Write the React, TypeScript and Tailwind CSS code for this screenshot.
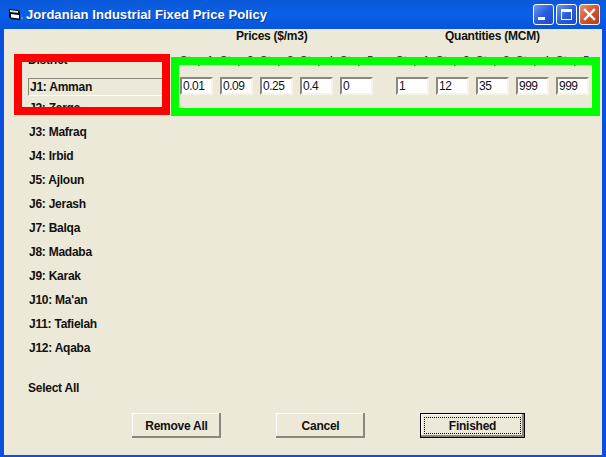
const districts = [
  "J2: Zarqa",
  "J3: Mafraq",
  "J4: Irbid",
  "J5: Ajloun",
  "J6: Jerash",
  "J7: Balqa",
  "J8: Madaba",
  "J9: Karak",
  "J10: Ma'an",
  "J11: Tafielah",
  "J12: Aqaba",
];
const prices = ["0.01", "0.09", "0.25", "0.4", "0"];
const quantities = ["1", "12", "35", "999", "999"];
const steps = ["Step 1", "Step 2", "Step 3", "Step 4", "Step 5"];

function Field({ value }: { value: string }) {
  return (
    <div className="flex h-[18px] w-[33px] items-center border-2 border-t-[#8a887e] border-l-[#8a887e] border-r-[#f5f3ea] border-b-[#f5f3ea] bg-white pl-px text-[12px] leading-none font-normal tracking-[-0.5px] text-[#111]">
      {value}
    </div>
  );
}

function StepGroup({ values }: { values: string[] }) {
  return (
    <div className="flex gap-[7px]">
      {values.map((v, i) => (
        <Field key={i} value={v} />
      ))}
    </div>
  );
}

function StepLabels() {
  return (
    <div className="flex gap-[7px]">
      {steps.map((s) => (
        <div key={s} className="w-[33px] text-center text-[11px] leading-[13px] font-normal tracking-[0.3px] whitespace-nowrap">
          {s}
        </div>
      ))}
    </div>
  );
}

function WinButton({ kind }: { kind: "min" | "max" | "close" }) {
  const bg =
    kind === "close"
      ? "bg-gradient-to-br from-[#e8906f] via-[#d8532a] to-[#b93a12]"
      : "bg-gradient-to-br from-[#6f97ee] via-[#2a5de0] to-[#1f48c8]";
  return (
    <div className={`flex h-[21px] w-[21px] items-center justify-center rounded-[3px] border border-white ${bg}`}>
      <svg width="15" height="15" viewBox="0 0 15 15">
        {kind === "min" && <rect x="2" y="10" width="7" height="3" fill="#fff" />}
        {kind === "max" && (
          <path d="M2 2h11v11H2z M3 5v7h9V5z" fill="#fff" fillRule="evenodd" />
        )}
        {kind === "close" && (
          <path d="M3 3l9 9M12 3l-9 9" stroke="#fff" strokeWidth="2.4" strokeLinecap="square" />
        )}
      </svg>
    </div>
  );
}

function PushButton({ label, focused }: { label: string; focused?: boolean }) {
  if (focused) {
    return (
      <div className="h-[25px] w-[105px] border border-black bg-[#ece9d8] shadow-[inset_-2px_-2px_0_#8a887e,inset_1px_1px_0_#fff]">
        <div className="m-[3px] flex h-[17px] items-center justify-center border border-dotted border-black">
          {label}
        </div>
      </div>
    );
  }
  return (
    <div className="flex h-[25px] w-[89px] items-center justify-center bg-[#ece9d8] shadow-[inset_-2px_-2px_0_#8a887e,inset_1px_1px_0_#fff]">
      {label}
    </div>
  );
}

export default function App() {
  return (
    <div className="relative flex h-[457px] w-[606px] flex-col overflow-hidden bg-[#0a4fe0] font-['Liberation_Sans',sans-serif] text-[12px] font-bold tracking-[-0.25px] text-[#111]">
      {/* Title bar */}
      <div className="flex h-[29px] shrink-0 items-center bg-gradient-to-b from-[#0a58d8] via-[#0a5fe8] to-[#0654dc] pr-[6px] pl-[8px]">
        <svg width="15" height="14" viewBox="0 0 15 14" className="mr-[3px]">
          <path d="M1 1l9 1 2 2v8l-9-1-2-2z" fill="#000" />
          <path d="M2 2l8 1v2l-8-1z" fill="#bfeaf0" />
          <path d="M3 6l8 1v3.500l-8-1z" fill="#fff" />
          <rect x="13" y="9" width="2" height="2" fill="#8a8a70" />
        </svg>
        <span className="text-[13px] tracking-[0.05px] whitespace-nowrap text-white [text-shadow:1px_1px_0_#0a3aa0]">
          Jordanian Industrial Fixed Price Policy
        </span>
        <div className="ml-auto flex gap-[2px]">
          <WinButton kind="min" />
          <WinButton kind="max" />
          <WinButton kind="close" />
        </div>
      </div>

      {/* Form */}
      <div className="mr-[4px] mb-[2px] ml-[4px] flex flex-1 flex-col bg-[#ece9d8]">
        <div className="flex">
          {/* District column */}
          <div className="ml-[24px] w-[135px] pt-[25px]">
            <div className="h-[24px] leading-[13px]">District</div>
            <div className="flex h-[18px] items-center border-t border-b border-l border-t-[#8a887e] border-b-white border-l-[#8a887e] pb-px pl-px">
              J1: Amman
            </div>
            {districts.map((d) => (
              <div key={d} className="flex h-[24px] items-center pl-px">
                {d}
              </div>
            ))}
          </div>

          {/* Steps */}
          <div className="ml-[17px] flex flex-col">
            <div className="flex h-[25px]">
              <div className="-mt-[2px] w-[265px] pl-[56px]">Prices ($/m3)</div>
              <div className="-mt-[2px] whitespace-nowrap">Quantities (MCM)</div>
            </div>
            <div className="flex gap-[23px]">
              <div className="flex flex-col gap-[10px]">
                <StepLabels />
                <StepGroup values={prices} />
              </div>
              <div className="flex flex-col gap-[10px]">
                <StepLabels />
                <StepGroup values={quantities} />
              </div>
            </div>
          </div>
        </div>

        <div className="mt-[22px] ml-[24px] leading-[13px]">Select All</div>

        <div className="mt-[18px] ml-[128px] flex gap-[55px]">
          <PushButton label="Remove All" />
          <PushButton label="Cancel" />
          <PushButton label="Finished" focused />
        </div>
      </div>

      {/* Highlight boxes drawn over the form */}
      <div className="absolute top-[54px] left-[14px] h-[61px] w-[156px] border-8 border-[#ff0000]" />
      <div className="absolute top-[57px] left-[171px] h-[59px] w-[429px] border-8 border-[#00ff00]" />
    </div>
  );
}
